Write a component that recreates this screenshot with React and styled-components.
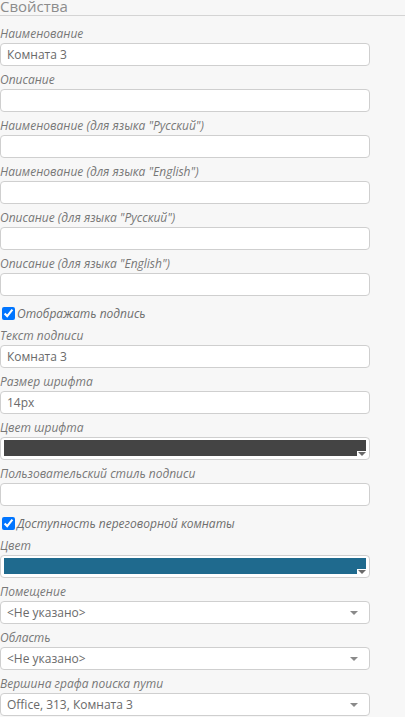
import React from "react";
import styled, { createGlobalStyle } from "styled-components";

const GlobalStyle = createGlobalStyle`
    html, body {
        margin: 0;
        padding: 0;
        background: #f7f7f7;
    }
    body {
        font-family: "Open Sans", "Liberation Sans", sans-serif;
        overflow: hidden;
    }
`;

const Panel = styled.div`
    width: 405px;
    height: 717px;
    overflow: hidden;
    background: #f7f7f7;
`;
const Title = styled.div`
    height: 15px;
    line-height: 13px;
    font-size: 15px;
    color: #8c8c8c;
    border-bottom: 1px solid #d4d4d4;
    overflow: visible;
`;
const Form = styled.div`
    width: 370px;
    padding-top: 4px;
`;
const Label = styled.label`
    display: block;
    height: 23px;
    padding-top: 6px;
    box-sizing: border-box;
    line-height: 16px;
    font-size: 12px;
    font-style: italic;
    color: #777;
    white-space: nowrap;
`;
const Input = styled.input`
    display: block;
    box-sizing: border-box;
    width: 100%;
    height: 23px;
    margin: 0;
    padding: 0 6px;
    font-family: inherit;
    font-size: 12px;
    color: #6a6a6a;
    background: #fff;
    border: 1px solid #cfcfcf;
    border-radius: 4px;
    outline: none;
`;
const CheckRow = styled.label`
    display: flex;
    align-items: center;
    height: 26px;
    padding-top: 9px;
    box-sizing: border-box;
    font-size: 12px;
    font-style: italic;
    color: #6e6e6e;
    white-space: nowrap;
`;
const Check = styled.input`
    width: 13px;
    height: 13px;
    margin: 0 2px 0 2px;
    accent-color: #0075ff;
`;
const ColorBox = styled.div`
    position: relative;
    box-sizing: border-box;
    height: 23px;
    padding: 2px 3px 3px 3px;
    background: #fff;
    border: 1px solid #cfcfcf;
    border-radius: 4px;
`;
const Swatch = styled.div`
    height: 100%;
    background: ${(p) => p.color};
`;
const SwatchArrow = styled.span`
    position: absolute;
    right: 2px;
    bottom: 2px;
    width: 10px;
    height: 6px;
    background: #fff;
    &::after {
        content: "";
        position: absolute;
        left: 1px;
        top: 1px;
        border-left: 4px solid transparent;
        border-right: 4px solid transparent;
        border-top: 4px solid #6a6a6a;
    }
`;
const Select = styled.div`
    display: flex;
    align-items: center;
    justify-content: space-between;
    box-sizing: border-box;
    height: 23px;
    padding: 0 11px 0 6px;
    font-size: 12px;
    color: #6a6a6a;
    background: #fff;
    border: 1px solid #cfcfcf;
    border-radius: 4px;
`;
const Arrow = styled.span`
    width: 0;
    height: 0;
    border-left: 4px solid transparent;
    border-right: 4px solid transparent;
    border-top: 4px solid #8a8a8a;
`;

const TextField = ({ label, value = "" }) => (
    <>
        <Label>{label}</Label>
        <Input defaultValue={value} />
    </>
);

const ColorField = ({ label, color }) => (
    <>
        <Label>{label}</Label>
        <ColorBox>
            <Swatch color={color} />
            <SwatchArrow />
        </ColorBox>
    </>
);

const SelectField = ({ label, value }) => (
    <>
        <Label>{label}</Label>
        <Select>
            <span>{value}</span>
            <Arrow />
        </Select>
    </>
);

const App = () => {
    return (
        <>
            <GlobalStyle />
            <Panel>
                <Title>Свойства</Title>
                <Form>
                    <TextField label="Наименование" value="Комната 3" />
                    <TextField label="Описание" />
                    <TextField label='Наименование (для языка "Русский")' />
                    <TextField label='Наименование (для языка "English")' />
                    <TextField label='Описание (для языка "Русский")' />
                    <TextField label='Описание (для языка "English")' />
                    <CheckRow>
                        <Check type="checkbox" defaultChecked />
                        Отображать подпись
                    </CheckRow>
                    <TextField label="Текст подписи" value="Комната 3" />
                    <TextField label="Размер шрифта" value="14px" />
                    <ColorField label="Цвет шрифта" color="#444444" />
                    <TextField label="Пользовательский стиль подписи" />
                    <CheckRow>
                        <Check type="checkbox" defaultChecked />
                        Доступность переговорной комнаты
                    </CheckRow>
                    <ColorField label="Цвет" color="#1f6a8e" />
                    <SelectField label="Помещение" value="<Не указано>" />
                    <SelectField label="Область" value="<Не указано>" />
                    <SelectField label="Вершина графа поиска пути" value="Office, 313, Комната 3" />
                </Form>
            </Panel>
        </>
    );
};

export default App;
